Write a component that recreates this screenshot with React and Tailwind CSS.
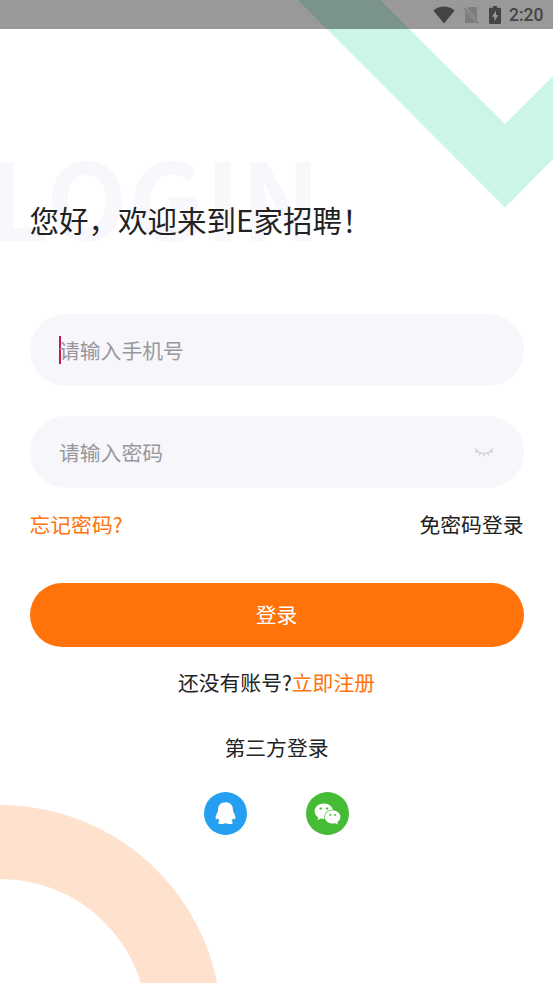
import { FaWeixin } from 'react-icons/fa';

function StatusBar() {
  return (
    <div className="relative z-10 h-[29px] shrink-0 bg-black/40 flex items-center justify-end pr-[9.5px] text-[#444444]">
      <svg className="w-[22px] h-[18px]" viewBox="0 0 22 18" fill="currentColor">
        <path d="M11 17.4 0.3 4.6C3.4 2 7 .6 11 .6s7.600 1.400 10.700 4z" />
      </svg>
      <svg className="ml-[8px] w-[16px] h-[18px]" viewBox="0 0 16 18">
        <path d="M6 1h7a1 1 0 0 1 1 1v12L4.500 3zM2 5l11 12H3a1 1 0 0 1-1-1z" fill="#7c7c7c" />
        <path d="M.8 2l14.500 15.500" stroke="#7c7c7c" strokeWidth="1.500" />
      </svg>
      <svg className="ml-[10.5px] w-[12px] h-[18px]" viewBox="0 0 12 18">
        <path d="M4 0h4v1.800h2.800A1.200 1.200 0 0 1 12 3v13.800a1.200 1.200 0 0 1-1.200 1.200H1.200A1.200 1.200 0 0 1 0 16.800V3a1.200 1.200 0 0 1 1.200-1.200H4z" fill="currentColor" />
        <path d="M7 4.500 3 10.800h2.400V15.500L9.200 9H7z" fill="#999999" />
      </svg>
      <span className="ml-[8px] text-[17.5px] leading-none font-medium font-[Roboto,sans-serif] pt-[3px]">2:20</span>
    </div>
  );
}

function Background() {
  return (
    <>
      <svg className="absolute top-0 right-0 w-[273px] h-[220px]" viewBox="280 0 273 220">
        <path d="M298 0h82l125 124 48-48v83l-48 48.500z" fill="#cbf5e9" />
      </svg>
      <svg className="absolute bottom-0 left-0 w-[230px] h-[193px]" viewBox="0 790 230 193">
        <circle cx="0" cy="1026.500" r="184.500" fill="none" stroke="#ffe2cd" strokeWidth="74" />
      </svg>
      <span className="absolute left-[-12px] top-[140.500px] text-[106px] leading-[108px] tracking-[0.8px] font-bold text-[#f7f7fc]">LOGIN</span>
    </>
  );
}

function QqIcon() {
  return (
    <svg className="w-[43px] h-[43px]" viewBox="0 0 43 43">
      <circle cx="21.500" cy="21.500" r="21.500" fill="#249ff1" />
      <path
        d="M21.500 10.300c-4.800 0-7.400 3.300-7.400 7 0 1.200-.1 2-.6 3-1.100 2-2 4.200-1.900 6 .1 1.500 1.200 1.300 2.300-.1.300 1.100.9 2 1.700 2.800-1.600.6-2 2.700.1 3 2.100.3 4.400.1 5.800-.9 1.400 1 3.700 1.200 5.800.9 2.100-.3 1.700-2.400.1-3 .8-.8 1.400-1.700 1.700-2.800 1.100 1.400 2.200 1.600 2.300.1.100-1.800-.8-4-1.900-6-.5-1-.6-1.800-.6-3 0-3.700-2.600-7-7.400-7z"
        fill="#ffffff"
      />
    </svg>
  );
}

export default function App() {
  return (
    <div className="relative w-full h-[983px] overflow-hidden bg-white flex flex-col text-[20.8px] leading-[30px] text-[#222222] font-['Noto_Sans_CJK_SC',sans-serif]">
      <Background />
      <StatusBar />

      <main className="relative flex flex-col px-[29.5px] pt-[168px]">
        <h1 className="text-[29.5px] leading-[44px] whitespace-nowrap">您好，欢迎来到E家招聘！</h1>

        <form className="mt-[73px] flex flex-col">
          <label className="h-[72px] rounded-full bg-[#f6f6fb] flex items-center px-[29.5px]">
            <span className="w-[2px] h-[28px] -mr-[2px] bg-[#c2185b]" />
            <input type="text" placeholder="请输入手机号" className="flex-1 min-w-0 pb-[1px] bg-transparent outline-none placeholder:text-[#98989c]" />
          </label>

          <label className="mt-[30px] h-[72px] rounded-full bg-[#f6f6fb] flex items-center px-[29.5px]">
            <input type="password" placeholder="请输入密码" className="flex-1 min-w-0 pb-[1px] bg-transparent outline-none placeholder:text-[#98989c]" />
            <svg className="w-[20px] h-[10px]" viewBox="0 0 20 10" fill="none" stroke="#cacace" strokeWidth="1.200" strokeLinecap="round">
              <path d="M1.500 2c2.300 3 5 4.400 8.500 4.400s6.200-1.400 8.500-4.400M3.200 3.700 1.600 5.300M6.400 5.800 5.400 8M10 6.500V9M13.600 5.800l1 2.200M16.800 3.700 18.400 5.300" />
            </svg>
          </label>

          <div className="mt-[21px] flex justify-between">
            <a className="text-[#ff730a]">忘记密码?</a>
            <a>免密码登录</a>
          </div>

          <button type="button" className="mt-[44px] h-[64px] pb-[2px] rounded-full bg-[#ff730a] text-white">登录</button>
        </form>

        <p className="mt-[20px] text-center">
          还没有账号?<a className="text-[#ff730a]">立即注册</a>
        </p>
        <p className="mt-[35px] text-center">第三方登录</p>

        <div className="mt-[30px] flex justify-center gap-[59px]">
          <QqIcon />
          <span className="w-[43px] h-[43px] rounded-full bg-[#46bb36] flex items-center justify-center text-white">
            <FaWeixin className="w-[27px] h-[24px]" />
          </span>
        </div>
      </main>
    </div>
  );
}
